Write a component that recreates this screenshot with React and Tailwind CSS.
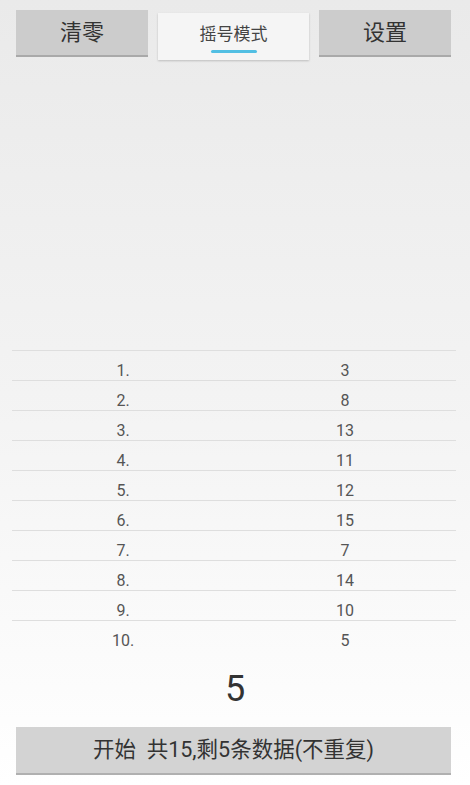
import React from 'react';

const rows = [
    ['1.', '3'],
    ['2.', '8'],
    ['3.', '13'],
    ['4.', '11'],
    ['5.', '12'],
    ['6.', '15'],
    ['7.', '7'],
    ['8.', '14'],
    ['9.', '10'],
    ['10.', '5'],
];

const font = { fontFamily: 'Roboto, "Noto Sans CJK SC", sans-serif' };

const App = () => {
    return (
        <div
            className="w-[470px] h-[785px] flex flex-col bg-gradient-to-b from-[#eaeaea] via-[#f3f3f3] to-[#ffffff] text-[#333]"
            style={font}
        >
            <div className="flex pt-[10px] px-[16px] gap-[10px] items-start">
                <button className="w-[132px] h-[47px] bg-[#cccccc] border-b-2 border-[#a9a9a9] text-[22px] text-[#333]">
                    清零
                </button>
                <div className="w-[151px] h-[47px] mt-[3px] bg-[#f5f5f5] shadow-[0_1px_2px_rgba(0,0,0,0.2)] flex flex-col items-center pt-[11px]">
                    <span className="text-[17px] text-[#444] leading-[20px]">摇号模式</span>
                    <div className="w-[46px] h-[3px] bg-[#52bfe3] mt-[6px] rounded-full" />
                </div>
                <button className="w-[132px] h-[47px] bg-[#cccccc] border-b-2 border-[#a9a9a9] text-[22px] text-[#333]">
                    设置
                </button>
            </div>

            <div className="mt-[290px] ml-[12px] mr-[14px]">
                {rows.map(([n, v]) => (
                    <div key={n} className="h-[30px] border-t border-[#dedede] flex text-[16px] text-[#555] pt-[10px] leading-[20px]">
                        <div className="flex-1 text-center">{n}</div>
                        <div className="flex-1 text-center">{v}</div>
                    </div>
                ))}
            </div>

            <div className="h-[77px] flex items-center justify-center text-[36px] text-[#333]">5</div>

            <button className="ml-[16px] mr-[19px] h-[48px] bg-[#d3d3d3] border-b-2 border-[#b0b0b0] text-[21.5px] text-[#333] whitespace-pre">
                开始  共15,剩5条数据(不重复)
            </button>
        </div>
    );
};

export default App;
